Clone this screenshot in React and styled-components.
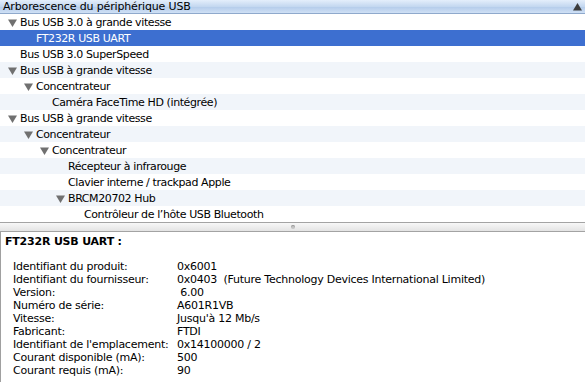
import React from "react";
import styled, { createGlobalStyle } from "styled-components";

const TREE = [
  { label: "Bus USB 3.0 à grande vitesse", level: 0, open: true },
  { label: "FT232R USB UART", level: 1, selected: true },
  { label: "Bus USB 3.0 SuperSpeed", level: 0 },
  { label: "Bus USB à grande vitesse", level: 0, open: true },
  { label: "Concentrateur", level: 1, open: true },
  { label: "Caméra FaceTime HD (intégrée)", level: 2 },
  { label: "Bus USB à grande vitesse", level: 0, open: true },
  { label: "Concentrateur", level: 1, open: true },
  { label: "Concentrateur", level: 2, open: true },
  { label: "Récepteur à infrarouge", level: 3 },
  { label: "Clavier interne / trackpad Apple", level: 3 },
  { label: "BRCM20702 Hub", level: 3, open: true },
  { label: "Contrôleur de l’hôte USB Bluetooth", level: 4 },
];

const DETAILS = [
  ["Identifiant du produit:", "0x6001"],
  ["Identifiant du fournisseur:", "0x0403  (Future Technology Devices International Limited)"],
  ["Version:", " 6.00"],
  ["Numéro de série:", "A601R1VB"],
  ["Vitesse:", "Jusqu'à 12 Mb/s"],
  ["Fabricant:", "FTDI"],
  ["Identifiant de l'emplacement:", "0x14100000 / 2"],
  ["Courant disponible (mA):", "500"],
  ["Courant requis (mA):", "90"],
];

const GlobalStyle = createGlobalStyle`
  html, body {
    margin: 0;
    padding: 0;
    background: #ffffff;
  }
  body {
    font-family: "DejaVu Sans", "Liberation Sans", sans-serif;
    color: #000;
  }
`;

const Disclosure = () => (
  <svg width="9" height="8" viewBox="0 0 9 8">
    <path d="M0 0.5 H9 L4.5 8 Z" fill="#707070" />
  </svg>
);

const SortArrow = () => (
  <svg width="9" height="8" viewBox="0 0 9 8">
    <path d="M0 7.5 H9 L4.5 0 Z" fill="#3c3c3c" />
  </svg>
);

const App = () => {
  return (
    <Window>
      <GlobalStyle />
      <Header>
        <HeaderTitle>Arborescence du périphérique USB</HeaderTitle>
        <SortArrow />
      </Header>
      <Tree>
        {TREE.map((row, i) => (
          <TreeRow key={i} $striped={i % 2 === 1} $selected={row.selected}>
            <Indent style={{ width: row.level * 16 + 8 }} />
            <Toggle>{row.open && <Disclosure />}</Toggle>
            <RowLabel>{row.label}</RowLabel>
          </TreeRow>
        ))}
      </Tree>
      <Splitter>
        <Dimple />
      </Splitter>
      <Details>
        <DetailsTitle>FT232R USB UART :</DetailsTitle>
        <Props>
          {DETAILS.map(([k, v]) => (
            <React.Fragment key={k}>
              <PropKey>{k}</PropKey>
              <PropValue>{v}</PropValue>
            </React.Fragment>
          ))}
        </Props>
      </Details>
    </Window>
  );
};

export default App;

const Window = styled.div`
  width: 585px;
  height: 382px;
  display: flex;
  flex-direction: column;
  overflow: hidden;
  background: #fff;
`;

const Header = styled.div`
  height: 13px;
  flex: none;
  display: flex;
  align-items: center;
  justify-content: space-between;
  padding: 0 3px 0 3px;
  background: linear-gradient(#e4eefb, #c4d8f0 50%, #b3cbea 51%, #cfe0f5);
  border-bottom: 1px solid #8fa9cc;
`;

const HeaderTitle = styled.span`
  font-size: 11px;
  line-height: 13px;
  letter-spacing: -0.15px;
`;

const Tree = styled.div`
  flex: none;
  display: flex;
  flex-direction: column;
`;

const TreeRow = styled.div`
  height: 16px;
  display: flex;
  align-items: center;
  background: ${(p) =>
    p.$selected ? "#3d6fd0" : p.$striped ? "#f1f5fa" : "#ffffff"};
  color: ${(p) => (p.$selected ? "#ffffff" : "#000000")};
`;

const Indent = styled.span`
  flex: none;
`;

const Toggle = styled.span`
  width: 12px;
  flex: none;
  display: flex;
  align-items: center;
  padding-top: 1px;
`;

const RowLabel = styled.span`
  font-size: 11px;
  line-height: 16px;
  padding-top: 2px;
  letter-spacing: -0.4px;
  white-space: nowrap;
`;

const Splitter = styled.div`
  height: 8px;
  flex: none;
  display: flex;
  align-items: center;
  justify-content: center;
  border-top: 1px solid #a3a3a3;
  border-bottom: 1px solid #a3a3a3;
  background: linear-gradient(#f7f7f7, #e3e3e3);
`;

const Dimple = styled.span`
  width: 4px;
  height: 4px;
  border-radius: 50%;
  background: #c4c4c4;
  box-shadow: inset 0 1px 0 #9a9a9a;
`;

const Details = styled.div`
  flex: 1;
  border-left: 1px solid #a0a0a0;
  padding: 2px 0 0 4px;
  font-size: 11px;
`;

const DetailsTitle = styled.div`
  font-weight: bold;
  line-height: 15px;
  letter-spacing: -0.2px;
  margin-bottom: 11px;
`;

const Props = styled.div`
  display: grid;
  grid-template-columns: 164px auto;
  grid-auto-rows: 13px;
  padding-left: 8px;
  line-height: 13px;
  letter-spacing: -0.25px;
`;

const PropKey = styled.span`
  white-space: nowrap;
`;

const PropValue = styled.span`
  white-space: pre;
`;
